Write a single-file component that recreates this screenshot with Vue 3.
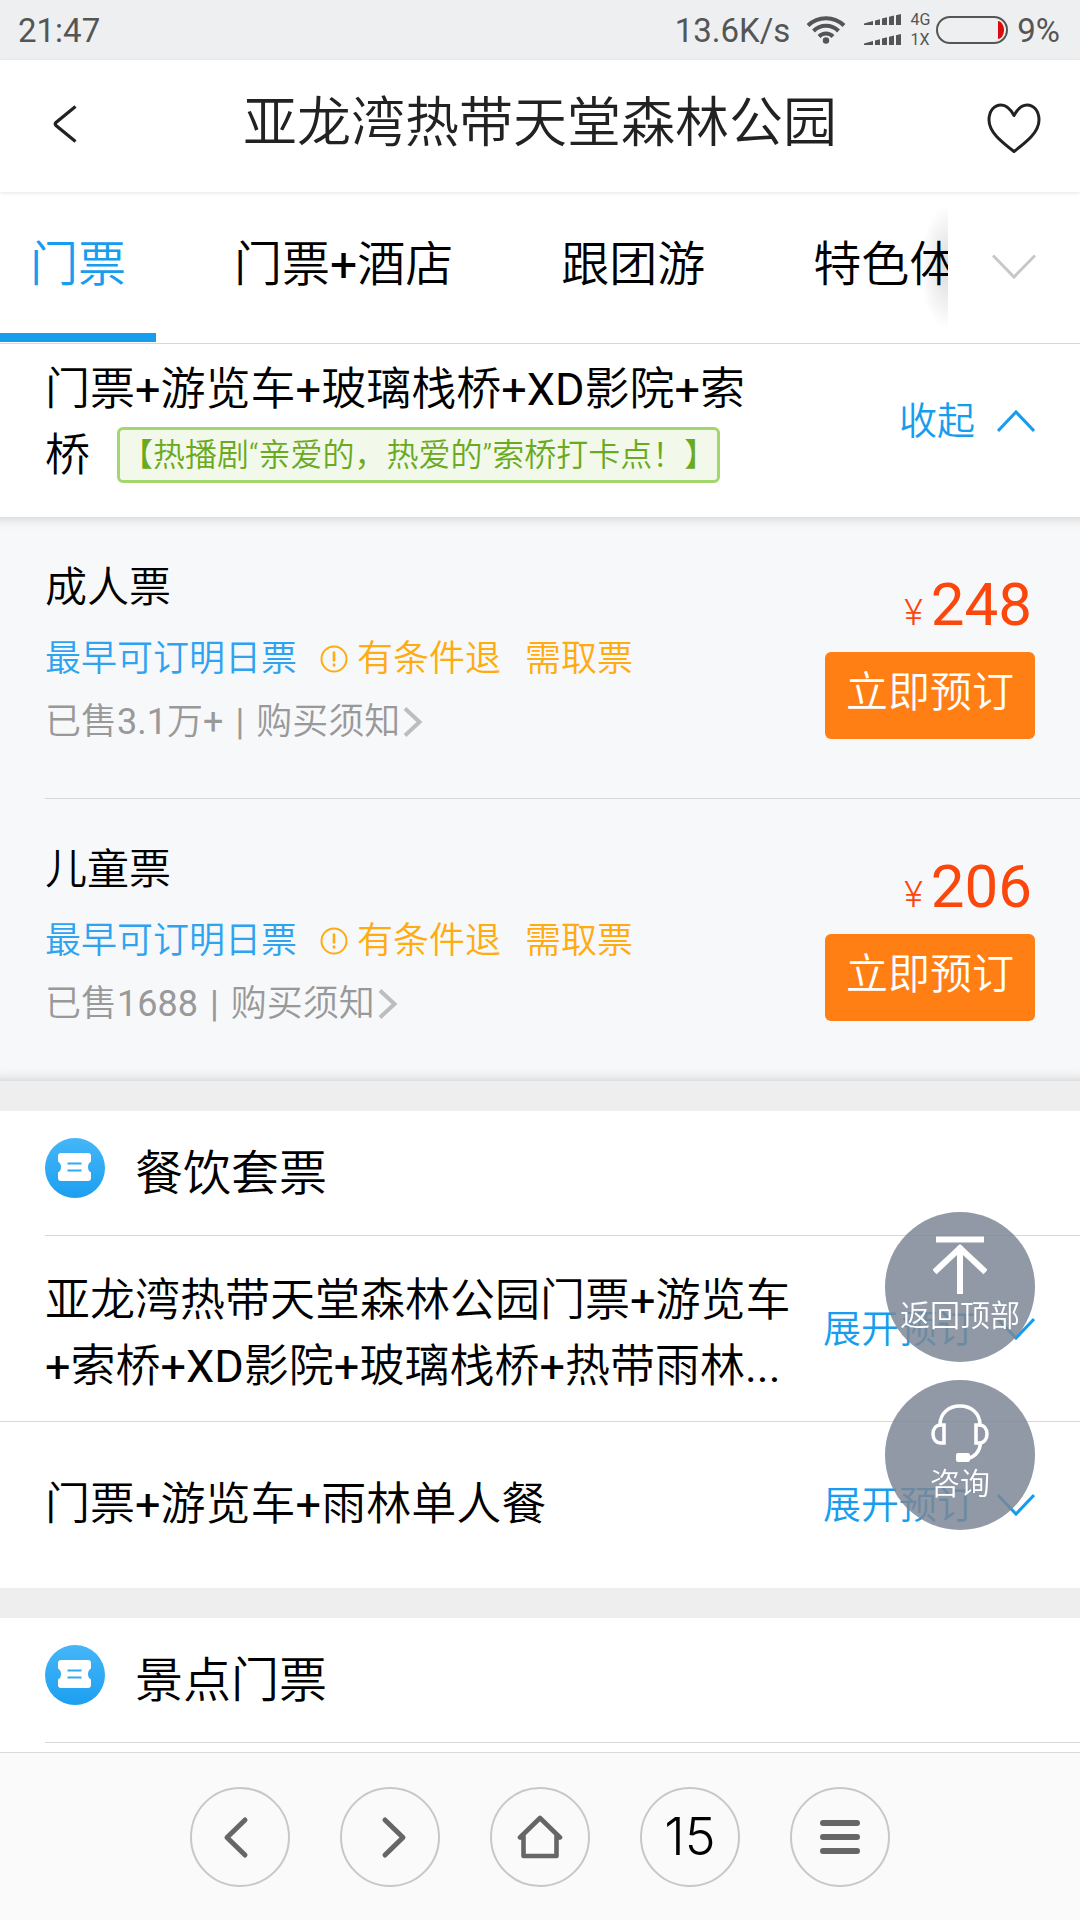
<script setup>
import { h, ref } from 'vue'

// Latin runs carry a regular weight next to the lighter Chinese glyphs.
const MixedText = (props) =>
  props.text
    .split(/([\x21-\x7e]+)/)
    .filter(Boolean)
    .map((run) => (/^[\x21-\x7e]/.test(run) ? h('span', { style: { fontWeight: 400 } }, run) : run))
MixedText.props = ['text']

const tabs = ['门票', '门票+酒店', '跟团游', '特色体验']
const activeTab = ref(0)

const tickets = [
  { name: '成人票', sold: '已售3.1万+', price: 248 },
  { name: '儿童票', sold: '已售1688', price: 206 },
]

const sections = [
  {
    title: '餐饮套票',
    products: [
      '亚龙湾热带天堂森林公园门票+游览车+索桥+XD影院+玻璃栈桥+热带雨林...',
      '门票+游览车+雨林单人餐',
    ],
  },
  { title: '景点门票', products: [] },
]
</script>

<template>
  <div class="app">
    <div class="status">
      <span class="clock">21:47</span>
      <span class="speed">13.6K/s</span>
      <svg class="wifi" width="40" height="30" viewBox="0 0 40 30" fill="none" stroke="#555" stroke-width="4">
        <path d="M2 10.500C12 .8 28 .8 38 10.500" />
        <path d="M7.500 16C14.500 9 25.500 9 32.500 16" />
        <path d="M13 21.500C17 17.500 23 17.500 27 21.500" />
        <circle cx="20" cy="25.500" r="3.200" fill="#555" stroke="none" />
      </svg>
      <svg class="signal" width="38" height="32" viewBox="0 0 38 32" fill="#555">
        <path d="M0 11V9.500L9 7v4zM11 11V6.500l5-1.300V11zM18 11V4.500l5-1.300V11zM25 11V2.800l5-1.300V11zM32 11V1.200L37 0v11z" />
        <path transform="translate(0 20)" d="M0 11V9.500L9 7v4zM11 11V6.500l5-1.300V11zM18 11V4.500l5-1.300V11zM25 11V2.800l5-1.300V11zM32 11V1.200L37 0v11z" />
      </svg>
      <span class="net"><span>4G</span><span>1X</span></span>
      <svg class="battery" width="72" height="28" viewBox="0 0 72 28">
        <rect x="1" y="1" width="70" height="26" rx="13" fill="none" stroke="#555" stroke-width="2" />
        <path d="M62 5c3 0 6 4 6 9s-3 9-6 9z" fill="#dc0a0a" />
      </svg>
      <span class="percent">9%</span>
    </div>

    <header class="header">
      <button class="back" aria-label="返回">
        <svg width="24" height="38" viewBox="0 0 24 38" fill="none" stroke="#222" stroke-width="3.200">
          <path d="M22.500 1.500 3 17.500Q1.500 19 3 20.500L22.500 36.500" />
        </svg>
      </button>
      <h1>亚龙湾热带天堂森林公园</h1>
      <button class="favorite" aria-label="收藏">
        <svg width="54" height="50" viewBox="0 0 54 50" fill="none" stroke="#222" stroke-width="3" stroke-linejoin="round">
          <path d="M27 12.500C23 5 18.500 2 14 2 7 2 2 8 2 17c0 12 12 21.500 25 31.500C40 38.500 52 29 52 17 52 8 47 2 40 2c-4.500 0-9 3-13 10.500z" />
        </svg>
      </button>
    </header>

    <nav class="tabs">
      <div class="tab-list">
        <button
          v-for="(tab, i) in tabs"
          :key="tab"
          class="tab"
          :class="{ active: i === activeTab }"
          @click="activeTab = i"
        ><MixedText :text="tab" /></button>
      </div>
      <button class="more" aria-label="更多">
        <svg width="44" height="26" viewBox="0 0 44 26" fill="none" stroke="#c8c8c8" stroke-width="3">
          <path d="M1 1.500 22 23 43 1.500" />
        </svg>
      </button>
    </nav>

    <main class="content">
      <div class="product open">
        <h2 class="name"><MixedText text="门票+游览车+玻璃栈桥+XD影院+索桥" /><span class="tag">【热播剧“亲爱的，热爱的”索桥打卡点！】</span></h2>
        <button class="toggle">
          收起
          <svg width="38" height="24" viewBox="0 0 38 24" fill="none" stroke="#169dee" stroke-width="3">
            <path d="M1 22 19 3 37 22" />
          </svg>
        </button>
      </div>

      <div class="tickets">
        <article v-for="t in tickets" :key="t.name" class="ticket">
          <div class="info">
            <h3>{{ t.name }}</h3>
            <p class="rules">
              <span class="early">最早可订明日票</span>
              <span class="cond">
                <svg width="28" height="28" viewBox="0 0 28 28" fill="none" stroke="#ffab12" stroke-width="2">
                  <circle cx="14" cy="14" r="12.500" />
                  <path d="M14 6.500v10M14 18.500v3" stroke-width="2.600" />
                </svg>
                有条件退
              </span>
              <span class="pick">需取票</span>
            </p>
            <p class="sold">
              <span><MixedText :text="t.sold" /></span>
              <span class="bar">|</span>
              <a href="#notice">
                购买须知
                <svg width="20" height="30" viewBox="0 0 20 30" fill="none" stroke="#bdbdbd" stroke-width="4">
                  <path d="M2 1.500 16.500 15 2 28.500" />
                </svg>
              </a>
            </p>
          </div>
          <div class="buy">
            <div class="price"><small>¥</small>{{ t.price }}</div>
            <button class="book">立即预订</button>
          </div>
        </article>
      </div>

      <section v-for="s in sections" :key="s.title" class="section">
        <div class="section-head">
          <svg width="60" height="60" viewBox="0 0 60 60">
            <defs>
              <linearGradient id="badge" x1="0" y1="0" x2="0" y2="1">
                <stop offset="0" stop-color="#45b6f8" />
                <stop offset="1" stop-color="#1c9ff0" />
              </linearGradient>
            </defs>
            <circle cx="30" cy="30" r="30" fill="url(#badge)" />
            <path d="M16 15h27q3 0 3 3v5.500q-3 1.500-3 5.500t3 5.500V40q0 3-3 3H16q-3 0-3-3v-5.500q3-1.500 3-5.500t-3-5.500V18q0-3 3-3z" fill="#fff" />
            <path d="M22.500 25.500h14M22.500 32.500h14" stroke="#30a9f4" stroke-width="2.200" />
          </svg>
          <h2>{{ s.title }}</h2>
        </div>
        <div v-for="p in s.products" :key="p" class="product">
          <h3 class="name"><MixedText :text="p" /></h3>
          <button class="toggle">
            展开预订
            <svg width="38" height="24" viewBox="0 0 38 24" fill="none" stroke="#169dee" stroke-width="3">
              <path d="M1 2 19 21 37 2" />
            </svg>
          </button>
        </div>
      </section>
    </main>

    <aside class="floats">
      <button class="float">
        <svg width="54" height="58" viewBox="0 0 54 58" fill="none" stroke="#fff" stroke-width="6">
          <path d="M3 3.500h48M27 10v48M1.500 36 27 12l25.500 24" />
        </svg>
        返回顶部
      </button>
      <button class="float">
        <svg width="58" height="58" viewBox="0 0 58 58" fill="none" stroke="#fff" stroke-width="3.600">
          <path d="M9 21C9 9 18 2 29 2s20 7 20 19" />
          <path d="M13 21h-3c-5 0-8 4-8 9s3 9 8 9h3zM45 21h3c5 0 8 4 8 9s-3 9-8 9h-3z" />
          <path d="M49.500 39C49 47 44 53 37 54.500" />
          <rect x="25" y="49" width="14" height="9" rx="2" fill="#fff" stroke="none" />
        </svg>
        咨询
      </button>
    </aside>

    <nav class="toolbar">
      <button class="round" aria-label="后退">
        <svg width="44" height="44" viewBox="0 0 44 44" fill="none" stroke="#666" stroke-width="5" stroke-linecap="round" stroke-linejoin="round">
          <path d="M27 5 9 22.500 27 40" />
        </svg>
      </button>
      <button class="round" aria-label="前进">
        <svg width="44" height="44" viewBox="0 0 44 44" fill="none" stroke="#666" stroke-width="5" stroke-linecap="round" stroke-linejoin="round">
          <path d="M17 5 35 22.500 17 40" />
        </svg>
      </button>
      <button class="round" aria-label="主页">
        <svg width="48" height="44" viewBox="0 0 48 44" fill="none" stroke="#666" stroke-width="4.600" stroke-linecap="round" stroke-linejoin="round">
          <path d="M4 22.500 24 3 44 22.500M7.500 21v20h33V21" />
        </svg>
      </button>
      <button class="round count" aria-label="窗口">15</button>
      <button class="round" aria-label="菜单">
        <svg width="40" height="36" viewBox="0 0 40 36" fill="none" stroke="#666" stroke-width="6" stroke-linecap="round">
          <path d="M3 4h34M3 18h34M3 32h34" />
        </svg>
      </button>
    </nav>
  </div>
</template>

<style>
body {
  background: #fff;
}
</style>

<style scoped>
.app {
  display: flex;
  flex-direction: column;
  height: 100vh;
  overflow: hidden;
  background: #fff;
  color: #000;
  font-family: Roboto, "Noto Sans CJK SC", sans-serif;
  font-weight: 350;
}
h1, h2, h3, p {
  margin: 0;
  font-weight: inherit;
}
button {
  padding: 0;
  border: 0;
  background: none;
  color: inherit;
  font: inherit;
  cursor: pointer;
}
svg {
  display: block;
  flex: none;
}

/* status bar */
.status {
  display: flex;
  flex: none;
  align-items: center;
  height: 60px;
  padding: 0 20px 0 18px;
  background: #eeeff1;
  color: #555;
  font-size: 33px;
  font-weight: 400;
}
.speed {
  margin-left: auto;
}
.wifi {
  margin-left: 16px;
}
.signal {
  margin-left: 18px;
}
.net {
  display: flex;
  flex-direction: column;
  margin: 0 6px 0 8px;
  font-size: 16px;
  line-height: 20px;
}
.percent {
  margin-left: 9px;
}

/* title bar */
.header {
  display: grid;
  flex: none;
  grid-template-columns: 1fr auto 1fr;
  align-items: center;
  height: 132px;
  padding: 0 39px 4px;
  box-sizing: border-box;
  box-shadow: 0 1px 4px rgba(0, 0, 0, 0.1);
  color: #222;
}
.header h1 {
  font-size: 54px;
  line-height: 120px;
}
.back {
  justify-self: start;
  padding-left: 14px;
}
.favorite {
  justify-self: end;
  padding-top: 8px;
}

/* category tabs */
.tabs {
  display: flex;
  flex: none;
  height: 150px;
  padding-bottom: 1px;
  border-bottom: 1px solid #d8d8d8;
}
.tab-list {
  display: flex;
  flex: 1;
  gap: 48px;
  min-width: 0;
  overflow: hidden;
}
.tab {
  flex: none;
  padding: 0 30px 6px;
  border-bottom: 9px solid transparent;
  font-size: 48px;
  white-space: nowrap;
}
.tab.active {
  border-bottom-color: #169dee;
  color: #169dee;
}
.more {
  position: relative;
  display: flex;
  flex: none;
  align-items: center;
  justify-content: center;
  width: 132px;
}
.more::before {
  content: "";
  position: absolute;
  top: 12px;
  bottom: 12px;
  right: 100%;
  width: 28px;
  background: radial-gradient(ellipse at right, rgba(0, 0, 0, 0.14), transparent 70%);
}

/* products */
.content {
  flex: 1;
  min-height: 0;
  overflow: hidden;
}
.product {
  display: flex;
  align-items: center;
  justify-content: space-between;
  min-height: 166px;
  padding: 0 45px;
}
.product + .product {
  border-top: 1px solid #d8d8d8;
}
.name {
  flex: 1;
  max-width: 760px;
  font-size: 45px;
  line-height: 66px;
}
.open .name {
  max-width: 720px;
  padding: 13px 0 28px;
}
.section-head + .product .name {
  padding: 32px 0 21px;
}
.tag {
  display: inline-block;
  margin: 4px 0 0 27px;
  padding: 0 1px;
  border: 3px solid #a3d76e;
  border-radius: 6px;
  background: #f2f9ea;
  color: #6aaa20;
  font-size: 32px;
  line-height: 50px;
  vertical-align: top;
  white-space: nowrap;
  text-spacing-trim: space-all;
}
.toggle {
  display: flex;
  flex: none;
  align-items: center;
  gap: 22px;
  color: #169dee;
  font-size: 38px;
  line-height: 48px;
}
.open .toggle {
  padding-bottom: 20px;
}

/* tickets */
.tickets {
  padding-bottom: 1px;
  background: #f7f8fa;
  box-shadow: inset 0 13px 13px -13px rgba(0, 0, 0, 0.2), inset 0 -13px 13px -13px rgba(0, 0, 0, 0.2);
}
.ticket {
  display: flex;
  justify-content: space-between;
  height: 281px;
  margin-left: 45px;
  padding-right: 45px;
}
.ticket + .ticket {
  border-top: 1px solid #d8d8d8;
}
.info {
  padding-top: 41px;
}
.info h3 {
  font-size: 42px;
  line-height: 60px;
}
.rules {
  display: flex;
  align-items: center;
  margin-top: 10px;
  color: #ffab12;
  font-size: 36px;
  line-height: 62px;
}
.early {
  color: #2fa3f0;
}
.cond {
  display: flex;
  align-items: center;
  gap: 9px;
  margin: 0 24px 0 23px;
}
.sold {
  display: flex;
  color: #999;
  font-size: 36px;
  line-height: 64px;
}
.bar {
  margin: 0 12px;
  font-weight: 400;
}
.sold a {
  display: flex;
  align-items: center;
  gap: 3px;
  color: inherit;
  text-decoration: none;
}
.buy {
  display: flex;
  flex-direction: column;
  align-items: flex-end;
  padding-top: 53px;
}
.price {
  padding-right: 3px;
  color: #fb460c;
  font-size: 60px;
  font-weight: 400;
  line-height: 70px;
}
.price small {
  margin-right: 8px;
  font-size: 36px;
  font-weight: 350;
}
.book {
  width: 210px;
  height: 87px;
  margin-top: 4px;
  padding-bottom: 14px;
  border-radius: 6px;
  background: #ff7f14;
  color: #fff;
  font-size: 42px;
}

/* grouped sections */
.section {
  border-top: 30px solid #eee;
}
.section-head {
  display: flex;
  align-items: center;
  gap: 30px;
  height: 125px;
  margin-left: 45px;
  padding-bottom: 10px;
  box-sizing: border-box;
  border-bottom: 1px solid #d8d8d8;
}
.section-head h2 {
  padding-top: 2px;
  font-size: 48px;
}

/* floating shortcuts */
.floats {
  position: fixed;
  right: 45px;
  bottom: 390px;
  display: flex;
  flex-direction: column;
  gap: 18px;
}
.float {
  display: flex;
  flex-direction: column;
  align-items: center;
  gap: 4px;
  width: 150px;
  height: 150px;
  padding-top: 24px;
  border-radius: 50%;
  background: rgba(125, 135, 149, 0.85);
  color: #fff;
  font-size: 30px;
  line-height: 36px;
}

/* browser toolbar */
.toolbar {
  display: flex;
  flex: none;
  align-items: center;
  justify-content: center;
  gap: 50px;
  height: 167px;
  border-top: 1px solid #d8d8d8;
  background: #fafafa;
}
.round {
  display: flex;
  align-items: center;
  justify-content: center;
  width: 100px;
  height: 100px;
  border: 2px solid #c8c8c8;
  border-radius: 50%;
  box-sizing: border-box;
}
.count {
  font-family: Inter, sans-serif;
  font-size: 52px;
}
</style>
